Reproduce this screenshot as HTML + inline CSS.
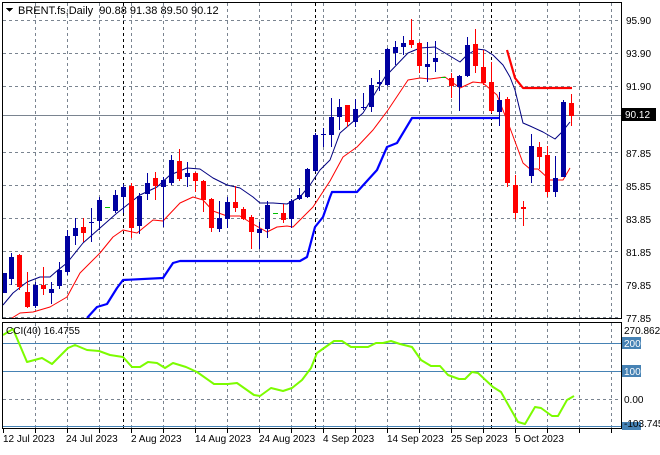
<!DOCTYPE html>
<html><head><meta charset="utf-8">
<style>
html,body{margin:0;padding:0;background:#fff;}
body{width:660px;height:450px;overflow:hidden;}
svg text{font-family:"Liberation Sans",sans-serif;font-size:10px;fill:#000;}
</style></head>
<body>
<svg id="s" width="660" height="450" xmlns="http://www.w3.org/2000/svg" shape-rendering="crispEdges">
<rect x="0" y="0" width="660" height="450" fill="#fff"/>
<g id="grid"></g>
<g id="lines" shape-rendering="auto"></g>
<g id="candles"></g>
<rect x="2.5" y="2.5" width="619" height="316" fill="none" stroke="#000"/>
<rect x="2.5" y="322.5" width="619" height="106" fill="none" stroke="#000"/>
<path d="M6 8 L13 8 L9.5 12 Z" fill="#000"/>
<text x="18" y="14" style="font-size:11px">BRENT.fs,Daily&#160;&#160;90.88 91.38 89.50 90.12</text>
<text x="626" y="24">95.90</text>
<text x="626" y="57">93.90</text>
<text x="626" y="90">91.90</text>
<text x="626" y="157">87.85</text>
<text x="626" y="190">85.85</text>
<text x="626" y="223">83.85</text>
<text x="626" y="256">81.85</text>
<text x="626" y="289">79.85</text>
<text x="626" y="322">77.85</text>
<rect x="622" y="108" width="34" height="13" fill="#000"/>
<text x="625" y="118" style="fill:#fff">90.12</text>
<text x="6" y="334">CCI(40) 16.4755</text>
<text x="624" y="334">270.8627</text>
<rect x="622" y="337" width="19" height="12" fill="#4682b4"/>
<text x="624" y="347" style="fill:#fff">200</text>
<rect x="622" y="365" width="19" height="12" fill="#4682b4"/>
<text x="624" y="375" style="fill:#fff">100</text>
<text x="624" y="403">0.00</text>
<rect x="622" y="422" width="19" height="8" fill="#4682b4"/>
<text x="624" y="427">-103.745</text>
<text x="3" y="442">12 Jul 2023</text>
<text x="66" y="442">24 Jul 2023</text>
<text x="131" y="442">2 Aug 2023</text>
<text x="195" y="442">14 Aug 2023</text>
<text x="259" y="442">24 Aug 2023</text>
<text x="323" y="442">4 Sep 2023</text>
<text x="387" y="442">14 Sep 2023</text>
<text x="451" y="442">25 Sep 2023</text>
<text x="515" y="442">5 Oct 2023</text>
</svg>
<script>
var NS="http://www.w3.org/2000/svg";
function el(p,t,a){var e=document.createElementNS(NS,t);for(var k in a)e.setAttribute(k,a[k]);p.appendChild(e);return e;}
var g=document.getElementById('grid');
for(var x=35;x<=611;x+=32){
  el(g,'line',{x1:x+.5,y1:3,x2:x+.5,y2:318,stroke:'#7a8490','stroke-dasharray':'3,3'});
  el(g,'line',{x1:x+.5,y1:323,x2:x+.5,y2:428,stroke:'#7a8490','stroke-dasharray':'3,3'});
}
[123,315,491].forEach(function(x){
  el(g,'line',{x1:x+.5,y1:3,x2:x+.5,y2:318,stroke:'#000','stroke-dasharray':'3,3'});
  el(g,'line',{x1:x+.5,y1:323,x2:x+.5,y2:428,stroke:'#000','stroke-dasharray':'3,3'});
});
[20,53,86,152,185,218,251,284,317].forEach(function(y){
  el(g,'line',{x1:3,y1:y+.5,x2:621,y2:y+.5,stroke:'#7a8490','stroke-dasharray':'3,3'});
});
el(g,'line',{x1:3,y1:115.5,x2:621,y2:115.5,stroke:'#7a8490'});
el(g,'line',{x1:3,y1:343.5,x2:621,y2:343.5,stroke:'#4682b4'});
el(g,'line',{x1:3,y1:371.5,x2:621,y2:371.5,stroke:'#4682b4'});
el(g,'line',{x1:3,y1:399.5,x2:621,y2:399.5,stroke:'#7a8490','stroke-dasharray':'3,3'});
el(g,'line',{x1:3,y1:426.5,x2:621,y2:426.5,stroke:'#4682b4'});
for(var x=3;x<=611;x+=32){el(g,'line',{x1:x+.5,y1:429,x2:x+.5,y2:433,stroke:'#000'});}
var L=document.getElementById('lines');
function pl(pts,c,w){el(L,'polyline',{points:pts,fill:'none',stroke:c,'stroke-width':w,'stroke-linejoin':'round'});}
pl("3,305 13,293 27,282 40,277 50,277 58,270 67,263 83,243 100,228 117,213 140,195 157,187 170,175 187,168 200,169 213,178 227,185 240,188 253,197 260,203 273,203 287,204 300,197 310,185 320,170 330,160 340,133 355,120 363,113 385,77 408,53 420,48 435,47 445,53 460,62 467,55 477,49 485,50 493,55 503,65 510,77 515,90 523,123 530,126 543,132 555,139 562,132 570,122",'#000080',1);
pl("12,318 20,313 33,312 50,307 67,297 80,273 100,253 113,237 123,230 137,233 153,220 163,221 180,203 193,197 203,200 213,211 227,216 240,216 253,224 267,232 277,227 287,226 293,227 313,207 330,181 343,157 357,147 373,130 388,110 408,80 420,78 430,79 445,77 460,88 473,82 483,83 497,95 510,128 523,163 530,169 538,169 550,180 563,180 570,168",'#ff0000',1);
pl("87,318 97,307 107,304 117,288 123,280 163,278 173,263 180,261 300,261 307,257 315,227 323,217 330,197 332,192 357,192 377,170 387,147 397,143 412,118 500,118",'#0000ff',2.2);
pl("507,50 515,78 523,88 572,88",'#ff0000',2.2);
pl("3,335 13,329 27,362 42,358 52,364 68,348 75,345 87,350 99,351 110,355 123,357 132,367 140,367 148,362 157,363 165,368 173,363 186,367 197,372 214,384 228,384 237,383 254,395 260,396 271,388 283,391 292,388 302,380 311,368 317,353 334,341 342,341 351,347 368,347 376,343 383,343 391,341 400,344 412,347 421,360 431,366 440,366 448,375 459,379 465,379 472,372 478,373 493,387 501,392 518,422 525,424 535,407 541,408 552,416 558,416 567,400 574,396",'#7cfc00',2);
var C=document.getElementById('candles');
var d=[[4,273,293,273,293,'b'],[11,257,279,253,285,'b'],[19,255,287,254,290,'r'],[27,292,307,272,308,'r'],[35,285,306,282,308,'b'],[43,285,289,267,295,'r'],[51,289,293,282,304,'b'],[59,270,286,262,289,'b'],[67,236,272,230,275,'b'],[75,228,236,218,245,'b'],[83,227,233,218,242,'r'],[91,222,223,208,242,'b'],[99,200,221,197,230,'b'],[107,207,207,207,207,'g'],[115,195,211,190,213,'b'],[123,187,197,184,213,'b'],[131,186,228,183,238,'r'],[139,196,226,193,234,'b'],[147,183,194,173,200,'b'],[155,178,186,172,200,'r'],[163,180,187,177,227,'b'],[171,160,183,155,185,'b'],[179,161,179,149,181,'r'],[187,173,177,162,187,'b'],[195,173,181,172,192,'r'],[203,181,200,180,212,'r'],[211,199,228,198,232,'r'],[219,218,229,201,232,'b'],[227,202,219,197,228,'b'],[235,202,208,186,212,'r'],[243,209,219,207,220,'r'],[251,217,232,215,249,'r'],[259,229,233,222,249,'b'],[267,205,229,201,238,'b'],[275,213,213,213,213,'g'],[283,213,220,204,223,'r'],[291,201,219,199,228,'b'],[299,195,199,188,200,'b'],[307,169,197,168,198,'b'],[315,135,171,133,172,'b'],[323,134,135,128,147,'b'],[331,117,135,98,147,'b'],[339,107,117,99,130,'b'],[347,105,122,105,127,'r'],[355,109,122,99,127,'b'],[363,107,108,93,110,'b'],[371,85,107,78,112,'b'],[379,82,84,70,91,'b'],[387,49,85,48,86,'b'],[395,47,53,41,65,'b'],[403,43,47,36,55,'b'],[411,40,45,19,48,'r'],[419,43,66,42,73,'r'],[427,64,67,42,82,'b'],[435,58,62,41,72,'b'],[443,77,77,77,77,'g'],[451,78,86,73,98,'r'],[459,76,87,75,111,'b'],[467,45,76,37,77,'b'],[475,44,66,29,73,'r'],[483,67,83,50,85,'r'],[491,82,111,62,113,'r'],[499,100,112,92,126,'b'],[507,99,183,97,187,'r'],[515,185,213,175,219,'r'],[523,207,209,201,226,'r'],[531,146,176,134,183,'b'],[539,147,157,142,169,'r'],[547,155,192,146,197,'r'],[555,178,192,156,197,'b'],[563,102,177,100,177,'b'],[571,103,116,94,126,'r']];
d.forEach(function(c){
  var col=c[5]=='b'?'#0000a0':(c[5]=='r'?'#ff0000':'#00c000');
  if(c[5]=='g'){el(C,'rect',{x:c[0]-2,y:c[1],width:5,height:1,fill:col});return;}
  el(C,'rect',{x:c[0],y:c[3],width:1,height:Math.max(1,c[4]-c[3]),fill:col});
  el(C,'rect',{x:c[0]-2,y:c[1],width:5,height:Math.max(1,c[2]-c[1]),fill:col});
});
</script>
</body></html>
